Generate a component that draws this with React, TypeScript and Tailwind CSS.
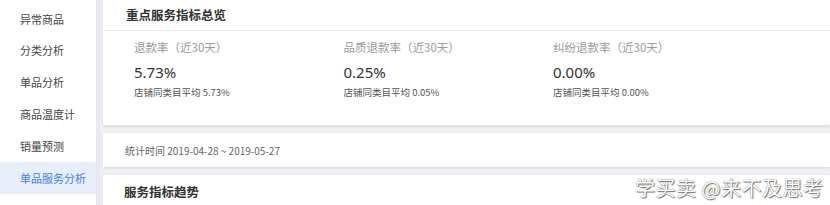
import React from "react";

const menu = ["异常商品", "分类分析", "单品分析", "商品温度计", "销量预测", "单品服务分析"];

const metrics = [
  { label: "退款率（近30天）", value: "5.73%", avg: "店铺同类目平均 5.73%" },
  { label: "品质退款率（近30天）", value: "0.25%", avg: "店铺同类目平均 0.05%" },
  { label: "纠纷退款率（近30天）", value: "0.00%", avg: "店铺同类目平均 0.00%" },
];

export default function App() {
  return (
    <div
      className="relative flex w-[830px] h-[205px] overflow-hidden bg-[#eef0f4]"
      style={{ fontFamily: '"Noto Sans CJK SC", "Noto Sans", sans-serif' }}
    >
      <div className="w-[100px] shrink-0 bg-white border-r-[4px] border-[#e6e9ef] pt-[3px]">
        {menu.map((m, i) => (
          <div
            key={m}
            className={`h-[31.8px] flex items-center pl-[20px] text-[11px] ${
              i === menu.length - 1 ? "bg-[#e8effb] text-[#3f7fe0]" : "text-[#444]"
            }`}
          >
            {m}
          </div>
        ))}
      </div>
      <div className="flex-1 pl-[3px] flex flex-col gap-[8px]">
        <div className="bg-white shadow-[0_1px_3px_rgba(0,0,0,0.12)] h-[125px] shrink-0">
          <div className="h-[31px] border-b border-[#ececec] flex items-center pl-[23px] text-[12.5px] font-bold text-[#333]">
            重点服务指标总览
          </div>
          <div className="flex pl-[31px] pt-[8px]">
            {metrics.map((m) => (
              <div key={m.label} className="w-[209.5px] flex flex-col">
                <div className="text-[11.5px] text-[#9a9a9a] leading-[17px]">{m.label}</div>
                <div className="text-[15px] text-[#333] leading-[20px] mt-[6px]" style={{ fontFamily: '"Noto Sans", "Noto Sans CJK SC", sans-serif' }}>{m.value}</div>
                <div className="text-[9.5px] text-[#555] leading-[14px] mt-[3px]">{m.avg}</div>
              </div>
            ))}
          </div>
        </div>
        <div className="bg-white shadow-[0_1px_3px_rgba(0,0,0,0.12)] h-[34px] shrink-0 flex items-center pl-[22px] text-[10px] text-[#666]">
          统计时间 2019-04-28 ~ 2019-05-27
        </div>
        <div className="bg-white shadow-[0_1px_3px_rgba(0,0,0,0.12)] flex-1 pl-[21px] pt-[8px] text-[12.5px] font-bold text-[#333]">
          服务指标趋势
        </div>
      </div>
      <div
        className="absolute left-[635px] top-[173px] text-[20px] text-white tracking-[0.5px]"
        style={{ textShadow: "0 0 1px #555, 1px 1px 1px #777" }}
      >
        学买卖 @来不及思考
      </div>
    </div>
  );
}
